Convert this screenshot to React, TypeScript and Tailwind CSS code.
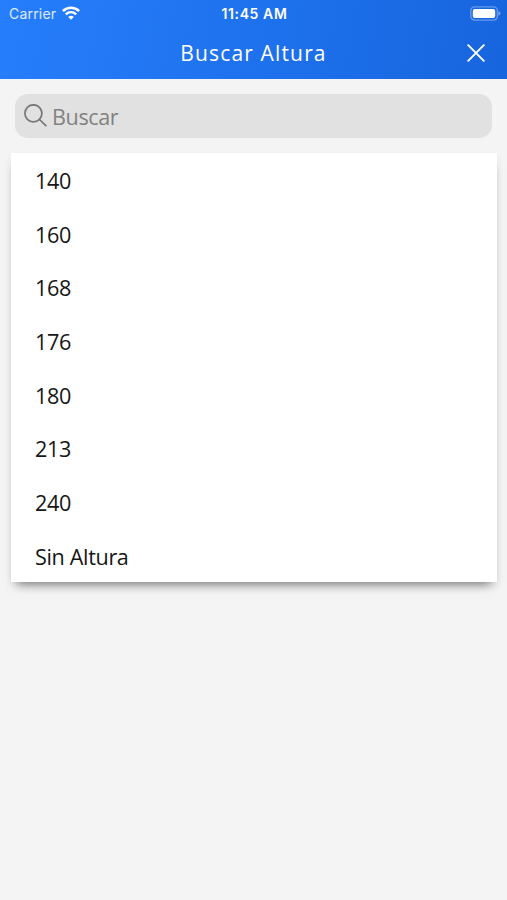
const heights = ["140", "160", "168", "176", "180", "213", "240", "Sin Altura"];

function WifiIcon() {
  return (
    <svg className="-mt-[2px] h-[14px] w-[18px]" viewBox="0 0 18 14" fill="none" stroke="white">
      <path d="M0.9 5.1a11.6 11.6 0 0 1 16.2 0" strokeWidth="2.6" />
      <path d="M3.8 8.3a7.4 7.4 0 0 1 10.4 0" strokeWidth="2.4" />
      <path d="M9 13.8 6.2 11a4 4 0 0 1 5.6 0z" fill="white" stroke="none" />
    </svg>
  );
}

function BatteryIcon() {
  return (
    <svg className="-mt-[2px] h-[15px] w-[31px]" viewBox="0 0 31 15">
      <rect x="0.8" y="0.9" width="26.6" height="13.2" rx="4" fill="none" stroke="white" strokeOpacity="0.35" strokeWidth="1.4" />
      <rect x="2.8" y="2.9" width="22.4" height="9.2" rx="2" fill="white" />
      <path d="M28.5 5.3c1.3.4 2 1.2 2 2.2s-.7 1.8-2 2.2z" fill="white" fillOpacity="0.4" />
    </svg>
  );
}

function StatusBar() {
  return (
    <div className="grid h-7 grid-cols-3 items-center pr-[6px] pl-[9px] font-['Inter',sans-serif] text-[14px] text-white">
      <div className="flex items-center gap-[6px]">
        <span className="-mt-[2px] tracking-[0.2px] text-white/85">Carrier</span>
        <WifiIcon />
      </div>
      <span className="-mt-[2px] -ml-[1px] text-center text-[14px] font-semibold tracking-[0.6px] whitespace-nowrap">11:45 AM</span>
      <div className="flex justify-end">
        <BatteryIcon />
      </div>
    </div>
  );
}

function Header() {
  return (
    <header className="h-[79px] bg-linear-[100deg] from-[#267efc] to-[#1765de]">
      <StatusBar />
      <div className="grid h-[51px] grid-cols-[40px_1fr_40px] items-center text-white">
        <h1 className="col-start-2 pt-px text-center text-[21px] tracking-[1.15px]">Buscar Altura</h1>
        <button type="button" aria-label="Cerrar">
          <svg className="-mt-[2px] size-[18px]" viewBox="0 0 18 18" stroke="white" strokeWidth="1.9" strokeLinecap="round">
            <path d="M1.2 1.2 16.8 16.8M16.8 1.2 1.2 16.8" />
          </svg>
        </button>
      </div>
    </header>
  );
}

function SearchBar() {
  return (
    <label className="mx-[15px] mt-[15px] flex h-[43.5px] items-center rounded-[13px] bg-[#e1e1e1] pl-[9px]">
      <svg className="size-[23px] shrink-0" viewBox="0 0 23 23" fill="none" stroke="#777" strokeWidth="1.7" strokeLinecap="round">
        <circle cx="9.4" cy="9.3" r="8.5" />
        <path d="m15.5 15.5 6.3 6.2" />
      </svg>
      <input
        className="ml-[5px] w-full bg-transparent pt-[2px] text-[21.6px] tracking-[-0.4px] outline-none placeholder:text-[#818181]"
        placeholder="Buscar"
      />
    </label>
  );
}

export default function App() {
  return (
    <div className="min-h-screen bg-[#f4f4f4] font-['Open_Sans','Noto_Sans',sans-serif]">
      <Header />
      <main className="flow-root">
        <SearchBar />
        <ul className="mt-[15px] mr-[10px] ml-[11px] h-[429.5px] bg-white shadow-[0_8px_10px_-6px_rgba(0,0,0,0.5),0_4px_8px_rgba(0,0,0,0.06)]">
          {heights.map((height) => (
            <li key={height} className="flex h-[53.7px] items-center px-6 pt-[3.4px] text-[21.6px] tracking-[-0.35px] text-[#161616]">
              {height}
            </li>
          ))}
        </ul>
      </main>
    </div>
  );
}
